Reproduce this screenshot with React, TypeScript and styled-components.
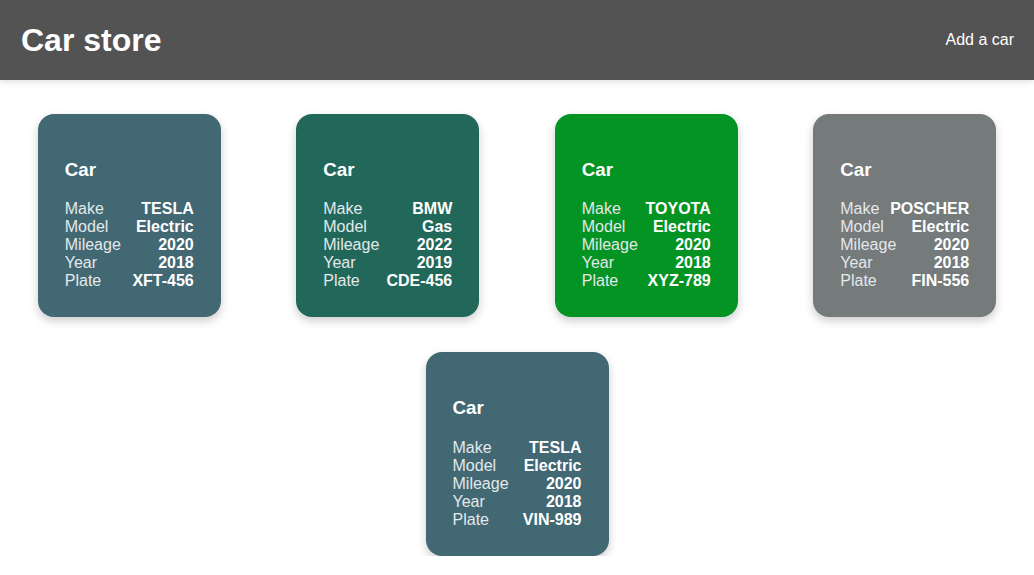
import React from "react";
import styled, { createGlobalStyle } from "styled-components";

type Car = {
  make: string;
  model: string;
  mileage: string;
  year: string;
  plate: string;
  color: string;
};

const cars: Car[] = [
  { make: "TESLA", model: "Electric", mileage: "2020", year: "2018", plate: "XFT-456", color: "#426874" },
  { make: "BMW", model: "Gas", mileage: "2022", year: "2019", plate: "CDE-456", color: "#22685a" },
  { make: "TOYOTA", model: "Electric", mileage: "2020", year: "2018", plate: "XYZ-789", color: "#039423" },
  { make: "POSCHER", model: "Electric", mileage: "2020", year: "2018", plate: "FIN-556", color: "#757a7b" },
  { make: "TESLA", model: "Electric", mileage: "2020", year: "2018", plate: "VIN-989", color: "#426874" },
];

const App = () => {
  return (
    <>
      <GlobalStyle />
      <Header>
        <Title>Car store</Title>
        <NavLink href="#">Add a car</NavLink>
      </Header>
      <Grid>
        {cars.map((car, i) => (
          <Cell key={i}>
            <Card $bg={car.color}>
              <CardTitle>Car</CardTitle>
              <Row><Label>Make</Label><Value>{car.make}</Value></Row>
              <Row><Label>Model</Label><Value>{car.model}</Value></Row>
              <Row><Label>Mileage</Label><Value>{car.mileage}</Value></Row>
              <Row><Label>Year</Label><Value>{car.year}</Value></Row>
              <Row><Label>Plate</Label><Value>{car.plate}</Value></Row>
            </Card>
          </Cell>
        ))}
      </Grid>
    </>
  );
};

const GlobalStyle = createGlobalStyle`
  body {
    margin: 0;
    font-family: "Liberation Sans", Arial, sans-serif;
    background: #fff;
  }
`;

const Header = styled.header`
  height: 80px;
  padding: 0 20px 0 21px;
  display: flex;
  align-items: center;
  justify-content: space-between;
  background: #535353;
  box-shadow: 0 2px 6px rgba(0, 0, 0, 0.12);
`;

const Title = styled.h1`
  margin: 0;
  color: #fff;
  font-size: 32px;
  font-weight: bold;
`;

const NavLink = styled.a`
  color: #fff;
  font-size: 16px;
  text-decoration: none;
`;

const Grid = styled.main`
  padding-top: 34px;
  display: flex;
  flex-wrap: wrap;
  justify-content: center;
  row-gap: 35px;
`;

const Cell = styled.div`
  width: 25%;
  display: flex;
  justify-content: center;
`;

const Card = styled.div<{ $bg: string }>`
  box-sizing: border-box;
  width: 183px;
  padding: 26px 27px 27px;
  border-radius: 16px;
  background: ${(p) => p.$bg};
  color: #fff;
  box-shadow: 0 4px 10px rgba(0, 0, 0, 0.2);
`;

const CardTitle = styled.h3`
  margin: 18.72px 0 19.7px;
  font-size: 18.72px;
`;

const Row = styled.div`
  display: flex;
  justify-content: space-between;
  font-size: 16px;
`;

const Label = styled.span`
  color: #e4e8ea;
`;

const Value = styled.span`
  font-weight: bold;
`;

export default App;
